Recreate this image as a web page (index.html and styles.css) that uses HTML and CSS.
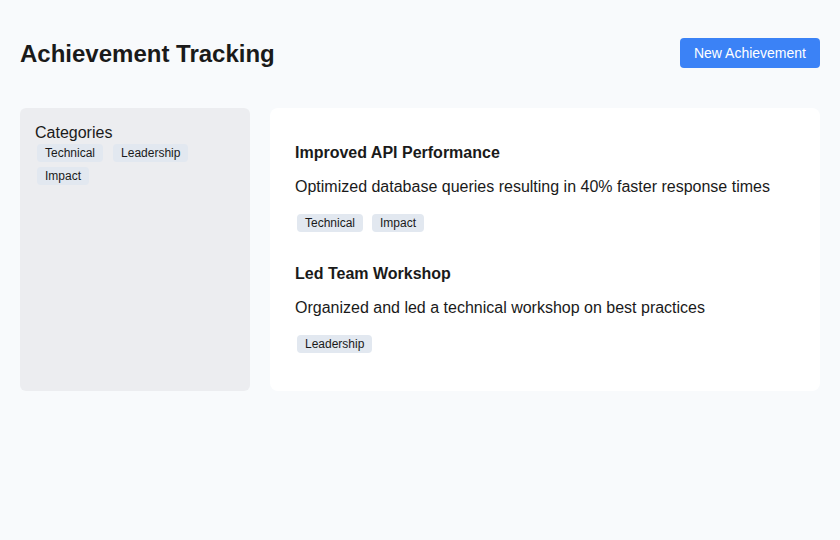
FILE: index.html
```html
<!DOCTYPE html>
<html>
<head>
<meta charset="utf-8">
<link rel="stylesheet" href="styles.css">
</head>
<body>
<div class="page">
  <header class="header">
    <h1 class="title">Achievement Tracking</h1>
    <button class="btn">New Achievement</button>
  </header>
  <div class="layout">
    <aside class="sidebar">
      <div class="side-title">Categories</div>
      <div class="side-tags">
        <span class="tag">Technical</span>
        <span class="tag">Leadership</span>
        <span class="tag">Impact</span>
      </div>
    </aside>
    <main class="card">
      <div class="item">
        <div class="item-title">Improved API Performance</div>
        <div class="item-desc">Optimized database queries resulting in 40% faster response times</div>
        <div class="item-tags">
          <span class="tag">Technical</span>
          <span class="tag">Impact</span>
        </div>
      </div>
      <div class="item">
        <div class="item-title">Led Team Workshop</div>
        <div class="item-desc">Organized and led a technical workshop on best practices</div>
        <div class="item-tags">
          <span class="tag">Leadership</span>
        </div>
      </div>
    </main>
  </div>
</div>
</body>
</html>
```

FILE: styles.css
```css
* { box-sizing: border-box; }
html, body { margin: 0; padding: 0; }
body {
  background: #f8fafc;
  font-family: "Liberation Sans", Arial, sans-serif;
  color: #1a1a1a;
  width: 840px;
  height: 540px;
  overflow: hidden;
}
.page { padding: 20px; }
.header {
  height: 66px;
  display: flex;
  align-items: center;
  justify-content: space-between;
  margin-bottom: 22px;
}
.title {
  margin: 0;
  font-size: 24px;
  font-weight: 700;
  line-height: 29px;
  color: #1a1a1a;
}
.btn {
  font-family: inherit;
  background: #3b82f6;
  color: #fff;
  border: none;
  border-radius: 4px;
  height: 30px;
  padding: 0 14px;
  font-size: 14px;
  line-height: 30px;
}
.layout {
  display: flex;
  gap: 20px;
  align-items: stretch;
}
.sidebar {
  width: 230px;
  flex: none;
  background: #ecedf0;
  border-radius: 6px;
  padding: 15px;
}
.side-title {
  font-size: 16px;
  line-height: 19px;
  color: #1a1a1a;
}
.side-tags {
  display: flex;
  flex-wrap: wrap;
  gap: 1px 6px;
}
.tag {
  display: inline-block;
  background: #e2e8f0;
  border-radius: 4px;
  font-size: 12px;
  line-height: 18px;
  height: 18px;
  padding: 0 8px;
  margin: 2px;
  color: #1a1a1a;
}
.card {
  flex: 1;
  background: #fff;
  border-radius: 8px;
  padding: 20px 25px 21px;
}
.item { padding: 15px 0; }
.item-title {
  font-size: 16px;
  font-weight: 700;
  line-height: 19px;
}
.item-desc {
  font-size: 16px;
  line-height: 20px;
  margin-top: 15px;
  color: #1a1a1a;
}
.item-tags {
  display: flex;
  gap: 5px;
  margin-top: 15px;
}
```
